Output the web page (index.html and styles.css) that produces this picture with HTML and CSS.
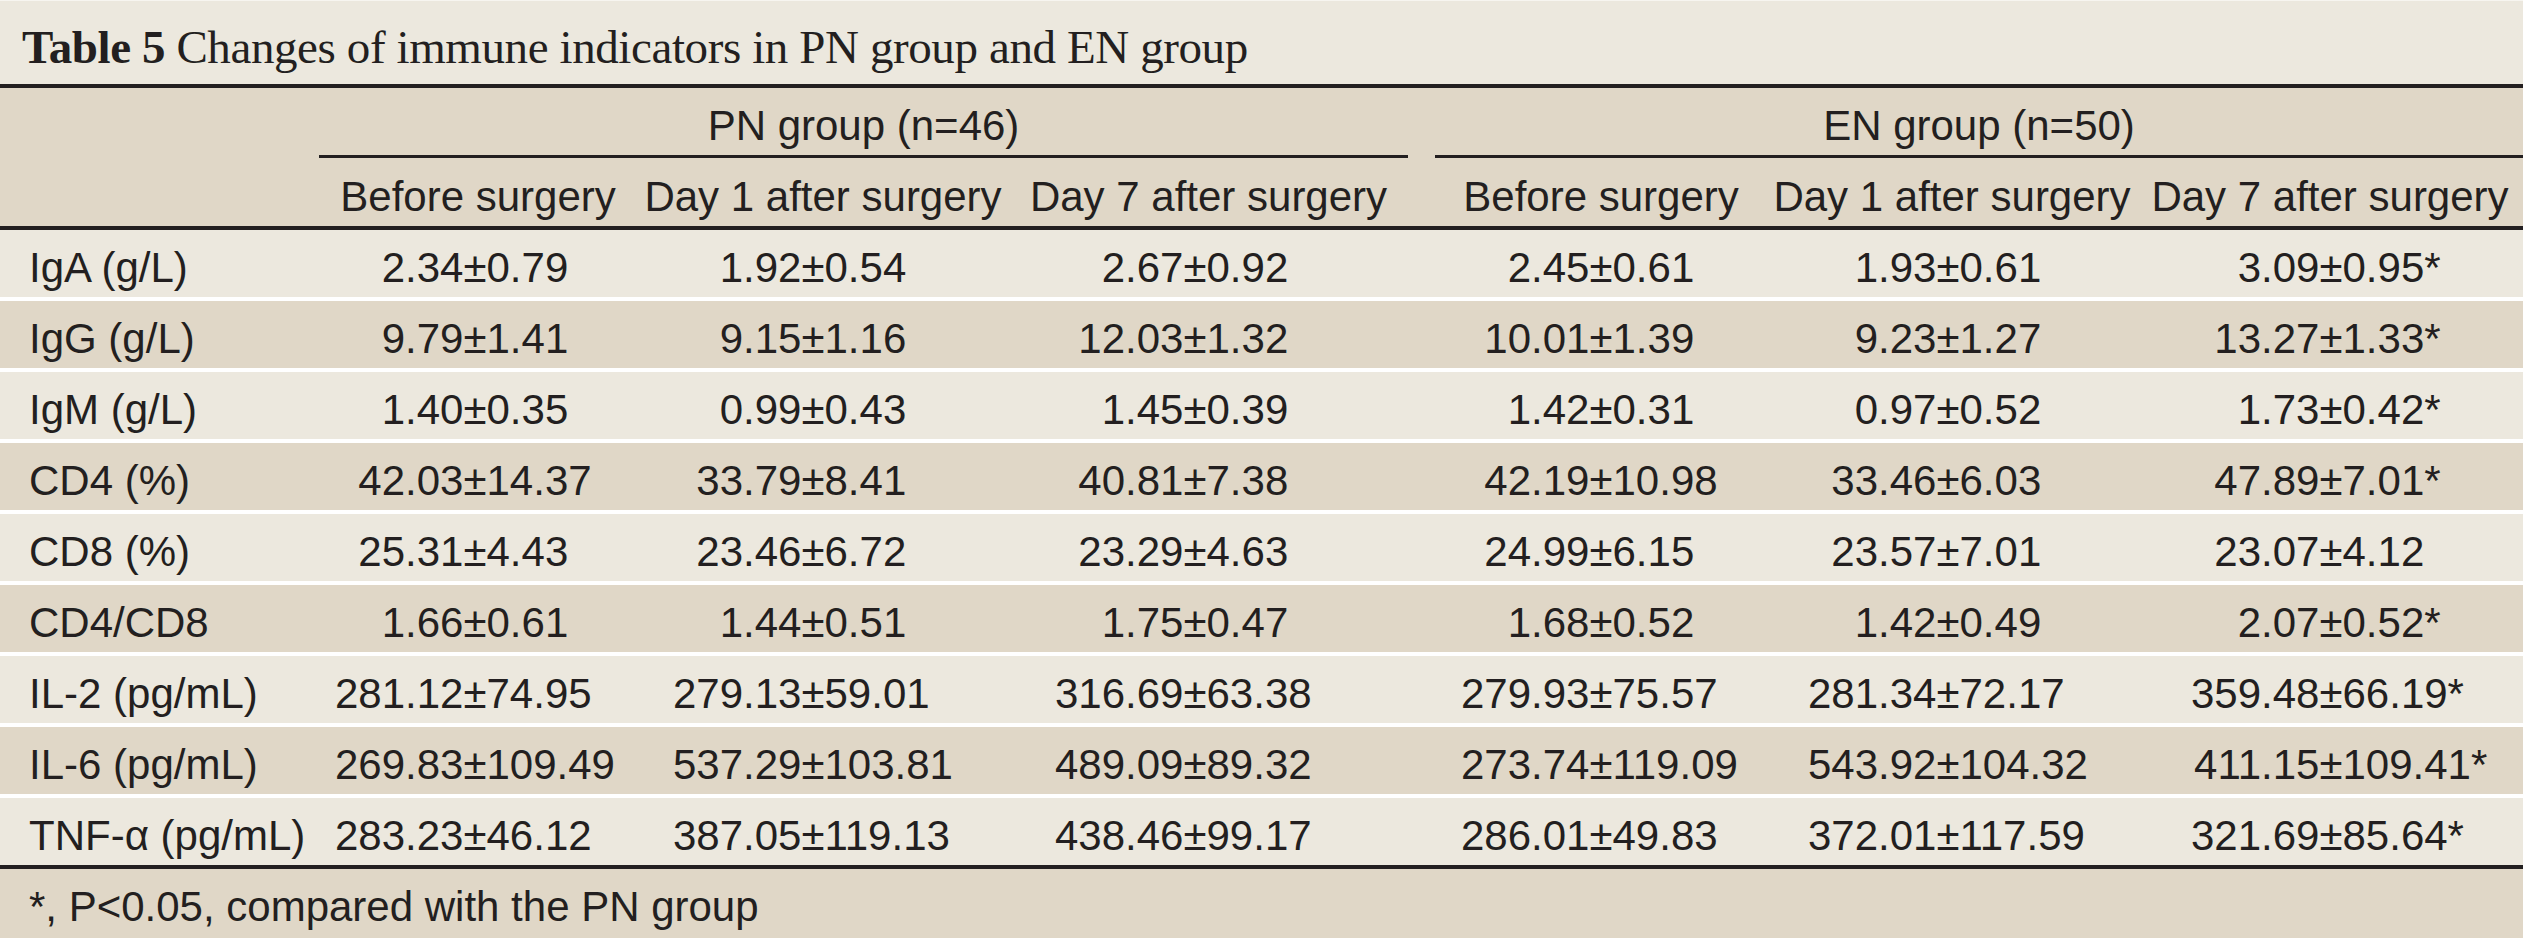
FILE: index.html
```html
<!DOCTYPE html>
<html lang="en">
<head>
<meta charset="utf-8">
<title>Table 5</title>
<link rel="stylesheet" href="styles.css">
</head>
<body>
<div class="table">
  <div class="title"><b>Table 5</b> Changes of immune indicators in PN group and EN group</div>
  <div class="head">
    <div class="grow">
      <div class="group pn">PN group (n=46)</div>
      <div class="group en">EN group (n=50)</div>
    </div>
    <div class="srow">
      <div class="sub c1">Before surgery</div>
      <div class="sub">Day 1 after surgery</div>
      <div class="sub">Day 7 after surgery</div>
      <div class="sub c4">Before surgery</div>
      <div class="sub">Day 1 after surgery</div>
      <div class="sub">Day 7 after surgery</div>
    </div>
  </div>
  <div class="body">
    <div class="row">
      <div class="label">IgA (g/L)</div>
      <div class="num"><span class="int">2</span>.34±0.79</div>
      <div class="num"><span class="int">1</span>.92±0.54</div>
      <div class="num"><span class="int">2</span>.67±0.92</div>
      <div class="num"><span class="int">2</span>.45±0.61</div>
      <div class="num"><span class="int">1</span>.93±0.61</div>
      <div class="num"><span class="int">3</span>.09±0.95*</div>
    </div>
    <div class="row">
      <div class="label">IgG (g/L)</div>
      <div class="num"><span class="int">9</span>.79±1.41</div>
      <div class="num"><span class="int">9</span>.15±1.16</div>
      <div class="num"><span class="int">12</span>.03±1.32</div>
      <div class="num"><span class="int">10</span>.01±1.39</div>
      <div class="num"><span class="int">9</span>.23±1.27</div>
      <div class="num"><span class="int">13</span>.27±1.33*</div>
    </div>
    <div class="row">
      <div class="label">IgM (g/L)</div>
      <div class="num"><span class="int">1</span>.40±0.35</div>
      <div class="num"><span class="int">0</span>.99±0.43</div>
      <div class="num"><span class="int">1</span>.45±0.39</div>
      <div class="num"><span class="int">1</span>.42±0.31</div>
      <div class="num"><span class="int">0</span>.97±0.52</div>
      <div class="num"><span class="int">1</span>.73±0.42*</div>
    </div>
    <div class="row">
      <div class="label">CD4 (%)</div>
      <div class="num"><span class="int">42</span>.03±14.37</div>
      <div class="num"><span class="int">33</span>.79±8.41</div>
      <div class="num"><span class="int">40</span>.81±7.38</div>
      <div class="num"><span class="int">42</span>.19±10.98</div>
      <div class="num"><span class="int">33</span>.46±6.03</div>
      <div class="num"><span class="int">47</span>.89±7.01*</div>
    </div>
    <div class="row">
      <div class="label">CD8 (%)</div>
      <div class="num"><span class="int">25</span>.31±4.43</div>
      <div class="num"><span class="int">23</span>.46±6.72</div>
      <div class="num"><span class="int">23</span>.29±4.63</div>
      <div class="num"><span class="int">24</span>.99±6.15</div>
      <div class="num"><span class="int">23</span>.57±7.01</div>
      <div class="num"><span class="int">23</span>.07±4.12</div>
    </div>
    <div class="row">
      <div class="label">CD4/CD8</div>
      <div class="num"><span class="int">1</span>.66±0.61</div>
      <div class="num"><span class="int">1</span>.44±0.51</div>
      <div class="num"><span class="int">1</span>.75±0.47</div>
      <div class="num"><span class="int">1</span>.68±0.52</div>
      <div class="num"><span class="int">1</span>.42±0.49</div>
      <div class="num"><span class="int">2</span>.07±0.52*</div>
    </div>
    <div class="row">
      <div class="label">IL-2 (pg/mL)</div>
      <div class="num"><span class="int">281</span>.12±74.95</div>
      <div class="num"><span class="int">279</span>.13±59.01</div>
      <div class="num"><span class="int">316</span>.69±63.38</div>
      <div class="num"><span class="int">279</span>.93±75.57</div>
      <div class="num"><span class="int">281</span>.34±72.17</div>
      <div class="num"><span class="int">359</span>.48±66.19*</div>
    </div>
    <div class="row">
      <div class="label">IL-6 (pg/mL)</div>
      <div class="num"><span class="int">269</span>.83±109.49</div>
      <div class="num"><span class="int">537</span>.29±103.81</div>
      <div class="num"><span class="int">489</span>.09±89.32</div>
      <div class="num"><span class="int">273</span>.74±119.09</div>
      <div class="num"><span class="int">543</span>.92±104.32</div>
      <div class="num"><span class="int">411</span>.15±109.41*</div>
    </div>
    <div class="row">
      <div class="label">TNF-α (pg/mL)</div>
      <div class="num"><span class="int">283</span>.23±46.12</div>
      <div class="num"><span class="int">387</span>.05±119.13</div>
      <div class="num"><span class="int">438</span>.46±99.17</div>
      <div class="num"><span class="int">286</span>.01±49.83</div>
      <div class="num"><span class="int">372</span>.01±117.59</div>
      <div class="num"><span class="int">321</span>.69±85.64*</div>
    </div>
  </div>
  <div class="foot">*, P&lt;0.05, compared with the PN group</div>
</div>
</body>
</html>
```

FILE: styles.css
```css
html, body {
  margin: 0;
  padding: 0;
  background: #ffffff;
}

.table {
  width: 2523px;
  color: #231f20;
  font-family: "Liberation Sans", Arial, sans-serif;
  font-size: 42px;
}

.title {
  height: 88px;
  box-sizing: border-box;
  border-top: 1px solid #f7f5f0;
  border-bottom: 4px solid #231f20;
  padding: 20px 0 0 22px;
  background: #ece8de;
  font-family: "Liberation Serif", "Times New Roman", serif;
  font-size: 47px;
  letter-spacing: -0.4px;
  line-height: 53px;
  white-space: nowrap;
}

.head {
  background: #e0d7c7;
  border-bottom: 4px solid #231f20;
}

.grow,
.srow,
.row {
  display: grid;
  grid-template-columns: 319px 318px 372px 399px 27px 332px 370px 386px;
  line-height: 47px;
  white-space: nowrap;
}

.group {
  text-align: center;
  padding: 14px 0 6px;
  border-bottom: 3px solid #231f20;
}

.group.pn {
  grid-column: 2 / 5;
}

.group.en {
  grid-column: 6 / 9;
}

.sub {
  text-align: center;
  padding: 15px 0 6px;
}

.sub.c1 {
  grid-column: 2;
}

.sub.c4 {
  grid-column: 6;
}

.body {
  display: flex;
  flex-direction: column;
  gap: 4px;
  background: #ffffff;
}

.row {
  height: 67px;
  box-sizing: border-box;
  padding-top: 14px;
  background: #ece8de;
}

.row:nth-child(even) {
  background: #e0d7c7;
}

.label {
  padding-left: 29px;
}

.int {
  display: inline-block;
  width: 3ch;
  text-align: right;
}

.row .num:nth-child(2) { padding-left: 16px; }
.row .num:nth-child(3) { padding-left: 36px; }
.row .num:nth-child(4) { padding-left: 46px; }
.row .num:nth-child(5) { grid-column: 6; padding-left: 26px; }
.row .num:nth-child(6) { padding-left: 41px; }
.row .num:nth-child(7) { padding-left: 54px; }

.foot {
  border-top: 4px solid #231f20;
  background: #e0d7c7;
  height: 73px;
  box-sizing: border-box;
  padding: 14px 0 0 29px;
  line-height: 47px;
  white-space: nowrap;
}
```
